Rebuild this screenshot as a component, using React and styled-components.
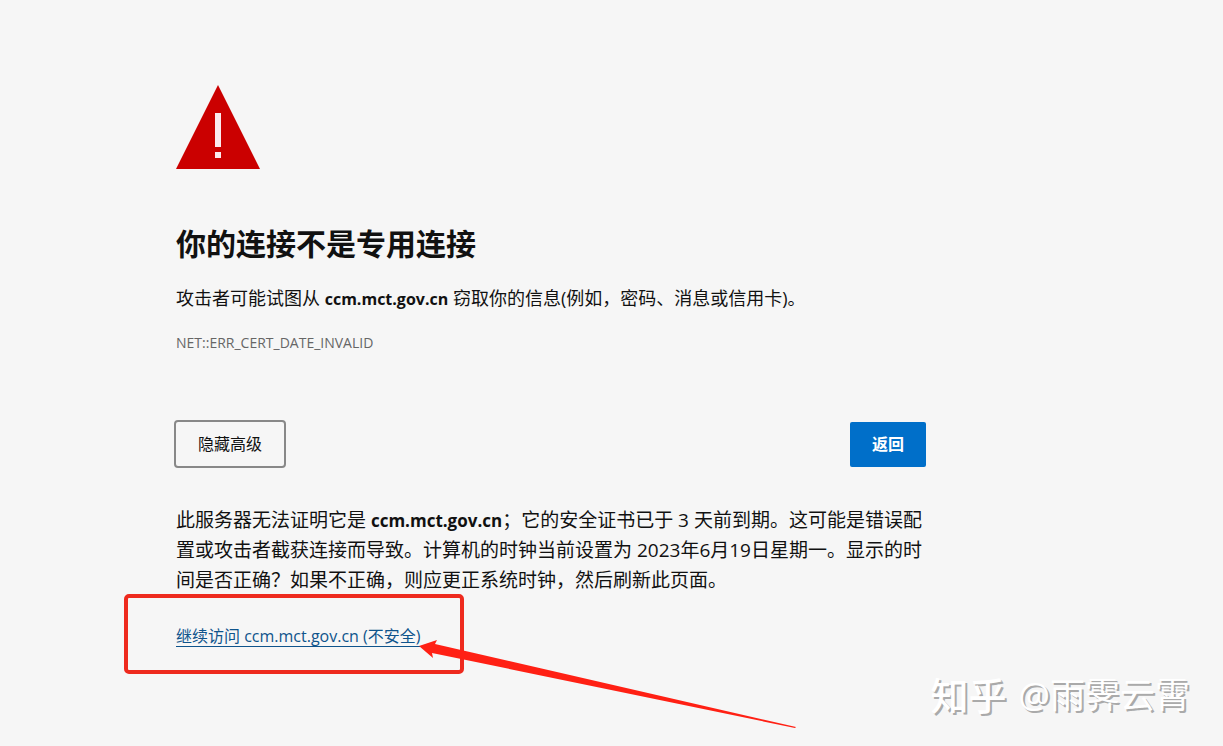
import React from 'react'
import styled, { createGlobalStyle, css } from 'styled-components'

const GlobalStyle = createGlobalStyle`
  body {
    margin: 0;
    background: #f6f6f6;
    color: #111;
    font-family: 'Open Sans', 'Noto Sans CJK SC', sans-serif;
  }
`

const Page = styled.div`
  position: relative;
  box-sizing: border-box;
  min-height: 100vh;
  padding: 85px 24px 72px 176px;
  overflow: hidden;
`

const Main = styled.main`
  max-width: 750px;
`

const Warning = styled.svg`
  display: block;
  width: 84px;
  height: 84px;
`

const Title = styled.h1`
  margin: 55px 0 0;
  font-size: 30px;
  line-height: 40px;
  font-weight: 700;
`

const Summary = styled.p`
  margin: 21px 0 0;
  font-size: 18px;
  line-height: 26px;
`

const Host = styled.strong`
  font-size: ${props => (props.$large ? 17 : 16)}px;
  line-height: 20px;
`

const ErrorCode = styled.div`
  margin-top: 22px;
  font-size: 14px;
  line-height: 20px;
  color: #666;
`

const Buttons = styled.div`
  display: flex;
  justify-content: space-between;
  margin-top: 69px;
`

const Button = styled.button`
  padding: 0 22px;
  border: 0;
  border-radius: 2px;
  font-family: inherit;
  font-size: 16px;
  line-height: 45px;
  cursor: pointer;
  ${props =>
    props.$primary
      ? css`
          background: #006fc9;
          color: #fff;
          font-weight: 700;
        `
      : css`
          height: 44px;
          background: #f6f6f6;
          color: #111;
          outline: 2px solid #888;
        `}
`

const Details = styled.p`
  margin: 38px 0 0;
  font-size: 19px;
  line-height: 30px;
`

const Proceed = styled.div`
  position: relative;
  display: flex;
  margin-top: 32px;
`

const ProceedLink = styled.a`
  border-bottom: 1px solid #0f548c;
  color: #0f548c;
  font-size: 16px;
  line-height: 19px;
  text-decoration: none;
`

const Frame = styled.div`
  position: absolute;
  top: -33px;
  left: -52px;
  box-sizing: border-box;
  width: 340px;
  height: 80px;
  border: 4px solid #ee2a1e;
  border-radius: 5px;
  pointer-events: none;
`

const Arrow = styled.svg`
  position: absolute;
  top: 11px;
  left: 243px;
  width: 378px;
  height: 92px;
  pointer-events: none;
`

const Watermark = styled.div`
  position: absolute;
  right: 33px;
  bottom: 26px;
  display: flex;
  align-items: center;
  gap: 12px;
  color: #fff;
  font-size: 35px;
  line-height: 50px;
  text-shadow: 2px 2px 0 #aaa;
`

const Brand = styled.span`
  font-size: 38px;
  font-weight: 500;
`

export default function App() {
  return (
    <Page>
      <GlobalStyle />
      <Main lang="zh-CN">
        <Warning viewBox="0 0 84 84" aria-hidden="true">
          <path d="M42 0 84 84H0Z" fill="#cb0000" />
          <path d="M39 28h6v34h-6zM39 67h6v6h-6z" fill="#fbeaee" />
        </Warning>
        <Title>你的连接不是专用连接</Title>
        <Summary>
          攻击者可能试图从 <Host>ccm.mct.gov.cn</Host>{' '}
          窃取你的信息(例如，密码、消息或信用卡)。
        </Summary>
        <ErrorCode>NET::ERR_CERT_DATE_INVALID</ErrorCode>
        <Buttons>
          <Button type="button">隐藏高级</Button>
          <Button type="button" $primary>
            返回
          </Button>
        </Buttons>
        <Details>
          此服务器无法证明它是 <Host $large>ccm.mct.gov.cn</Host>
          ；它的安全证书已于 3
          天前到期。这可能是错误配置或攻击者截获连接而导致。计算机的时钟当前设置为
          2023年6月19日星期一。显示的时间是否正确？如果不正确，则应更正系统时钟，然后刷新此页面。
        </Details>
        <Proceed>
          <ProceedLink href="#">继续访问 ccm.mct.gov.cn (不安全)</ProceedLink>
          <Frame />
          <Arrow viewBox="0 0 378 92" aria-hidden="true">
            <path
              d="M0 8 18 2 16 6 377 89 376 90 13 15 14 20Z"
              fill="#ff2014"
            />
          </Arrow>
        </Proceed>
      </Main>
      <Watermark>
        <Brand>知乎</Brand>
        <span>@雨霁云霄</span>
      </Watermark>
    </Page>
  )
}
